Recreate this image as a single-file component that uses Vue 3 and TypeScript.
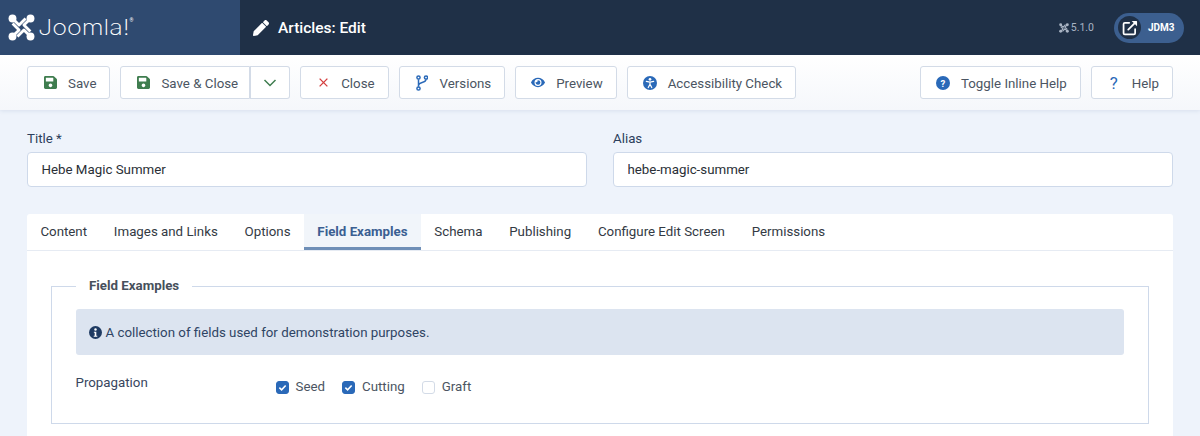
<script setup lang="ts">
const tabs = ['Content', 'Images and Links', 'Options', 'Field Examples', 'Schema', 'Publishing', 'Configure Edit Screen', 'Permissions']
const checks = [
  { label: 'Seed', on: true },
  { label: 'Cutting', on: true },
  { label: 'Graft', on: false },
]
const turns = [0, 90, 180, 270]
</script>

<template>
  <div class="page">
    <header class="top">
      <div class="brand">
        <svg class="mark" viewBox="0 0 30 30" width="27" height="27">
          <g v-for="r in turns" :key="r" :transform="`rotate(${r} 15 15)`">
            <path d="M5.500 5.500L12.300 12.300L19.500 5.100" fill="none" stroke="#fff" stroke-width="3.200" stroke-linejoin="round" />
            <circle cx="5" cy="5" r="4.400" fill="#fff" />
          </g>
        </svg>
        <span class="word">Joomla!</span><sup class="reg">®</sup>
      </div>
      <div class="bar">
        <svg class="pencil" viewBox="0 0 512 512" width="16" height="16"><path fill="#fff" d="M497.9 142.1l-46.1 46.1c-4.7 4.7-12.3 4.7-17 0l-111-111c-4.7-4.7-4.7-12.3 0-17l46.1-46.1c18.7-18.7 49.100-18.700 67.900 0l60.100 60.100c18.800 18.700 18.800 49.100 0 67.900zM284.200 99.800L21.600 362.400.4 483.900c-2.900 16.400 11.400 30.600 27.800 27.800l121.500-21.300 262.600-262.600c4.700-4.700 4.700-12.300 0-17l-111-111c-4.800-4.700-12.400-4.700-17.100 0z" /></svg>
        <h1>Articles: Edit</h1>
        <div class="right">
          <span class="ver">
            <svg viewBox="0 0 30 30" width="10" height="10">
              <g v-for="r in turns" :key="r" :transform="`rotate(${r} 15 15)`">
                <path d="M5.500 5.500L12.300 12.300L19.500 5.100" fill="none" stroke="#a9b4c4" stroke-width="3.400" />
                <circle cx="5" cy="5" r="4.400" fill="#a9b4c4" />
              </g>
            </svg>
            5.1.0
          </span>
          <span class="site">
            <span class="disc">
              <svg viewBox="0 0 512 512" width="16" height="16"><path fill="none" stroke="#fff" stroke-width="56" stroke-linejoin="round" stroke-linecap="round" d="M230 90H90a40 40 0 0 0-40 40v290a40 40 0 0 0 40 40h290a40 40 0 0 0 40-40V290" /><path fill="none" stroke="#fff" stroke-width="56" stroke-linecap="round" d="M200 310L440 70" /><path fill="#fff" d="M310 30h150a22 22 0 0 1 22 22v150z" /></svg>
            </span>
            <span class="sname">JDM3</span>
          </span>
        </div>
      </div>
    </header>

    <nav class="toolbar">
      <button class="btn"><span class="ic"><svg viewBox="0 0 448 512" width="13" height="15"><path fill="#3f7d4f" d="M433.900 129.900l-83.900-83.900A48 48 0 0 0 316.100 32H48C21.500 32 0 53.500 0 80v352c0 26.500 21.500 48 48 48h352c26.500 0 48-21.500 48-48V163.900a48 48 0 0 0-14.100-34zM224 416c-35.300 0-64-28.700-64-64s28.700-64 64-64 64 28.700 64 64-28.700 64-64 64zm96-304.500V212c0 6.600-5.400 12-12 12H76c-6.600 0-12-5.400-12-12V108c0-6.600 5.400-12 12-12h228.500c3.200 0 6.200 1.300 8.500 3.500l3.500 3.500c2.200 2.200 3.500 5.300 3.500 8.500z" /></svg></span>Save</button>
      <div class="split">
        <button class="btn main"><span class="ic"><svg viewBox="0 0 448 512" width="13" height="15"><path fill="#3f7d4f" d="M433.900 129.900l-83.900-83.900A48 48 0 0 0 316.100 32H48C21.500 32 0 53.500 0 80v352c0 26.500 21.500 48 48 48h352c26.500 0 48-21.500 48-48V163.900a48 48 0 0 0-14.100-34zM224 416c-35.300 0-64-28.700-64-64s28.700-64 64-64 64 28.700 64 64-28.700 64-64 64zm96-304.500V212c0 6.600-5.400 12-12 12H76c-6.600 0-12-5.400-12-12V108c0-6.600 5.400-12 12-12h228.500c3.200 0 6.200 1.300 8.500 3.500l3.500 3.500c2.200 2.200 3.500 5.300 3.500 8.500z" /></svg></span>Save &amp; Close</button>
        <button class="btn caret"><svg viewBox="0 0 14 8" width="14" height="8"><path d="M1.500 1l5.500 5.500L12.500 1" fill="none" stroke="#3f7d4f" stroke-width="1.500" /></svg></button>
      </div>
      <button class="btn"><span class="ic"><svg viewBox="0 0 10 10" width="9" height="9"><path d="M.7.7l8.600 8.600M9.300.7L.7 9.300" stroke="#d43f3f" stroke-width="1.500" fill="none" /></svg></span>Close</button>
      <button class="btn"><span class="ic"><svg viewBox="0 0 12 16" width="12" height="16"><g fill="none" stroke="#2a69b8" stroke-width="1.500"><circle cx="2.500" cy="2.500" r="1.600" /><circle cx="2.500" cy="13.500" r="1.600" /><circle cx="10" cy="2.500" r="1.600" /><path d="M2.500 4.200V11.800M10 4.200C10 8.500 2.500 6.500 2.500 10.500" /></g></svg></span>Versions</button>
      <button class="btn"><span class="ic"><svg viewBox="0 0 576 512" width="15" height="13"><path fill="#2a69b8" d="M572.500 241.400C518.300 135.600 410.900 64 288 64S57.700 135.600 3.500 241.400a32.400 32.400 0 0 0 0 29.200C57.700 376.400 165.100 448 288 448s230.300-71.600 284.500-177.400a32.400 32.400 0 0 0 0-29.200zM288 400a144 144 0 1 1 144-144 143.900 143.900 0 0 1-144 144zm0-240a95.300 95.300 0 0 0-25.300 3.800 47.900 47.900 0 0 1-66.900 66.900A95.800 95.800 0 1 0 288 160z" /></svg></span>Preview</button>
      <button class="btn"><span class="ic"><svg viewBox="0 0 16 16" width="14" height="14"><circle cx="8" cy="8" r="8" fill="#2a69b8" /><circle cx="8" cy="3.800" r="1.500" fill="#fff" /><path d="M3.800 6.100L8 7l4.200-.9M8 7v2.500M8 9.500L6 13.200M8 9.500l2 3.700" fill="none" stroke="#fff" stroke-width="1.400" stroke-linecap="round" /></svg></span>Accessibility Check</button>
      <div class="spacer"></div>
      <button class="btn"><span class="ic"><svg viewBox="0 0 16 16" width="14" height="14"><circle cx="8" cy="8" r="8" fill="#2a69b8" /><text x="8" y="12" text-anchor="middle" class="qm">?</text></svg></span>Toggle Inline Help</button>
      <button class="btn help"><span class="ic q">?</span>Help</button>
    </nav>

    <main class="content">
      <div class="fields">
        <label class="field"><span>Title *</span><input value="Hebe Magic Summer" /></label>
        <label class="field"><span>Alias</span><input value="hebe-magic-summer" /></label>
      </div>

      <section class="card">
        <div class="tabs">
          <button v-for="t in tabs" :key="t" class="tab" :class="{ active: t === 'Field Examples' }">{{ t }}</button>
        </div>
        <div class="pane">
          <fieldset>
            <legend>Field Examples</legend>
            <div class="alert">
              <svg viewBox="0 0 16 16" width="13" height="13"><circle cx="8" cy="8" r="8" fill="#1f3b63" /><circle cx="8" cy="4.300" r="1.500" fill="#fff" /><path d="M6 7h3v5h1.200v1.300H5.800V12H7V8.300H6z" fill="#fff" /></svg>
              <span>A collection of fields used for demonstration purposes.</span>
            </div>
            <div class="row">
              <div class="lab">Propagation</div>
              <div class="checks">
                <span v-for="c in checks" :key="c.label" class="chk">
                  <span class="box" :class="{ on: c.on }">
                    <svg v-if="c.on" viewBox="0 0 10 10" width="9" height="9"><path d="M1.500 5.200L4 7.500 8.500 2.700" fill="none" stroke="#fff" stroke-width="1.800" /></svg>
                  </span>{{ c.label }}
                </span>
              </div>
            </div>
          </fieldset>
        </div>
      </section>
    </main>
  </div>
</template>

<style>
html, body { margin: 0; height: 100%; overflow: hidden; background: #eef3fb; }
</style>

<style scoped>
.page { width: 1200px; height: 436px; overflow: hidden; font-family: Roboto, "Liberation Sans", sans-serif; color: #3f4650; background: #eef3fb; }
.top { display: flex; height: 55px; background: #1f3047; }
.brand { width: 240px; background: #2f4a70; display: flex; align-items: center; padding-left: 8px; box-sizing: border-box; }
.word { display: inline-block; margin-left: 3px; font-family: Inter, sans-serif; font-weight: 200; font-size: 21px; color: #fff; line-height: 1; transform: scaleX(1.2); transform-origin: left center; }
.reg { font-size: 5px; color: #fff; margin: -14px 0 0 15px; line-height: 1; }
.bar { flex: 1; display: flex; align-items: center; padding-left: 13px; color: #fff; }
.pencil { margin-right: 9px; }
h1 { font-size: 15.500px; font-weight: 500; margin: 0; }
.right { margin-left: auto; display: flex; align-items: center; padding-right: 16px; }
.ver { font-size: 10.500px; color: #a9b4c4; display: inline-flex; gap: 2px; align-items: center; margin-right: 20px; }
.site { display: flex; align-items: center; width: 70px; height: 30px; border-radius: 15px; background: #3c5f8f; }
.disc { width: 23px; height: 23px; margin-left: 4px; border-radius: 50%; background: #1f3047; display: flex; align-items: center; justify-content: center; }
.sname { font-size: 10px; font-weight: 700; margin-left: 7px; color: #fff; }

.toolbar { height: 55px; box-sizing: border-box; padding: 11px 27px; display: flex; gap: 10px; background: linear-gradient(#fff, #f5f7fb); box-shadow: 0 1px 4px rgba(60, 90, 140, .12); position: relative; }
.spacer { flex: 1; }
.btn { height: 33px; box-sizing: border-box; padding: 1px 13px 0 15px; display: flex; align-items: center; background: #fff; border: 1px solid #d3dbe7; border-radius: 3px; font: 400 13.300px Roboto, sans-serif; color: #4b5562; white-space: nowrap; }
.ic { width: 14px; height: 16px; margin-right: 11px; display: flex; align-items: center; justify-content: center; flex: none; margin-top: -1px; }
.qm { font: 700 11px Roboto, sans-serif; fill: #fff; }
.q { color: #2a69b8; font-size: 17px; }
.split { display: flex; }
.main { border-radius: 3px 0 0 3px; padding-right: 11px; }
.caret { border-left: 0; border-radius: 0 3px 3px 0; width: 40px; padding: 0; justify-content: center; box-shadow: inset 1px 0 0 #d3dbe7; }

.content { padding: 20px 27px 0; }
.fields { display: grid; grid-template-columns: 560px 560px; gap: 26px; }
.field { display: block; }
.field span { display: block; font-size: 13.300px; line-height: 18px; color: #2c3e5c; margin-bottom: 4px; }
.field input { display: block; width: 100%; height: 35px; box-sizing: border-box; border: 1px solid #ced9ea; border-radius: 4px; padding: 0 13.500px; font: 400 13.300px Roboto, sans-serif; color: #2a2f36; background: #fff; outline: 0; }

.card { margin-top: 27px; background: #fff; border-radius: 3px 3px 0 0; height: 300px; }
.tabs { display: flex; height: 37px; box-sizing: border-box; border-bottom: 1px solid #e6ebf3; }
.tab { height: 36px; box-sizing: border-box; padding: 0 13.400px 2px; border: 0; background: none; font: 400 13.300px Roboto, sans-serif; color: #333a44; white-space: nowrap; }
.tab.active { font-weight: 700; color: #3b5f92; background: #f1f5fa; border-bottom: 3px solid #6f8fb7; padding-top: 3px; }
.pane { padding: 26px 24px 0; }
fieldset { margin: 0; padding: 14px 24px 0 23.500px; border: 1px solid #ced9ea; height: 147px; box-sizing: border-box; min-width: 0; }
legend { font-size: 13.300px; font-weight: 700; color: #47505c; padding: 0 13px; line-height: 18px; margin-left: .5px; }
.alert { display: flex; align-items: center; gap: 3.500px; height: 46px; box-sizing: border-box; padding: 0 13.500px; background: #dce4f0; border-radius: 3px; font-size: 13.300px; color: #2f4464; }
.row { display: flex; margin-top: 20px; }
.lab { width: 200px; font-size: 13.300px; line-height: 16px; color: #37465e; }
.checks { display: flex; gap: 17px; padding-top: 4px; }
.chk { display: flex; align-items: center; font-size: 13.300px; line-height: 16px; color: #4b5562; }
.box { width: 13px; height: 13px; box-sizing: border-box; border: 1px solid #d3dbe7; border-radius: 3px; background: #fff; margin-right: 7px; display: flex; align-items: center; justify-content: center; }
.box.on { background: #2a69b8; border-color: #2a69b8; }
</style>
